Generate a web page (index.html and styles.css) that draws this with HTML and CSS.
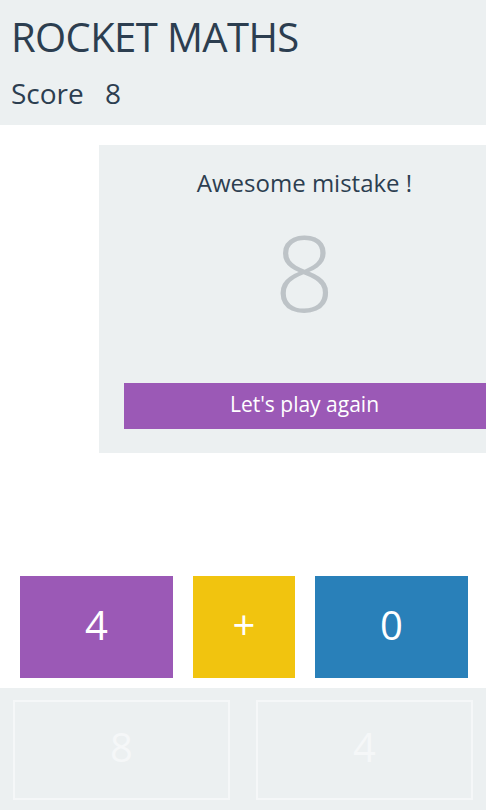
FILE: index.html
```html
<!DOCTYPE html>
<html>
<head>
<meta charset="utf-8">
<link rel="stylesheet" href="styles.css">
</head>
<body>
<div class="app">
  <header class="top">
    <h1 class="title">ROCKET MATHS</h1>
    <div class="score">Score <span class="score-val">8</span></div>
  </header>
  <section class="card">
    <div class="msg">Awesome mistake !</div>
    <div class="big">8</div>
    <button class="again">Let's play again</button>
  </section>
  <div class="tiles">
    <div class="tile purple">4</div>
    <div class="tile yellow op">+</div>
    <div class="tile blue">0</div>
  </div>
  <div class="answers">
    <div class="answer">8</div>
    <div class="answer">4</div>
  </div>
</div>
</body>
</html>
```
FILE: styles.css
```css
* { box-sizing: border-box; }
html, body { margin: 0; padding: 0; background: #fff; }
body { font-family: "Open Sans", "Noto Sans", sans-serif; color: #2c3e50; }
.app { width: 486px; height: 810px; overflow: hidden; }
.top {
  height: 125px;
  background: #ecf0f1;
  padding: 13px 0 0 11px;
}
.title {
  margin: 0;
  font-size: 40px;
  line-height: 48px;
  font-weight: 400;
  letter-spacing: -0.6px;
}
.score {
  margin-top: 15px;
  font-size: 28px;
  line-height: 34px;
}
.score-val { margin-left: 14px; }
.card {
  margin: 20px 0 0 99px;
  width: 387px;
  height: 308px;
  background: #ecf0f1;
  padding: 22px 0 0 24px;
  display: flex;
  flex-direction: column;
  align-items: center;
}
.msg { font-size: 24px; line-height: 32px; }
.big {
  margin-top: 20px;
  font-size: 105px;
  line-height: 105px;
  font-weight: 350;
  color: #bdc3c7;
}
.again {
  margin-top: 59px;
  width: 362px;
  height: 46px;
  border: 0;
  padding: 0 0 4px;
  background: #9b59b6;
  color: #fff;
  font-family: inherit;
  font-size: 21px;
  line-height: 42px;
}
.tiles {
  margin-top: 123px;
  padding-left: 20px;
  display: flex;
  gap: 20px;
}
.tile {
  width: 153px;
  height: 102px;
  color: #fff;
  font-size: 40px;
  line-height: 98px;
  padding-bottom: 4px;
  text-align: center;
}
.tile.op { width: 102px; }
.purple { background: #9b59b6; }
.yellow { background: #f1c40f; }
.blue { background: #2980b9; }
.answers {
  margin-top: 10px;
  height: 122px;
  background: #ecf0f1;
  padding: 12px 13px;
  display: flex;
  gap: 26px;
}
.answer {
  width: 218px;
  height: 100px;
  border: 2px solid #f5f7f8;
  color: #f5f7f8;
  font-size: 40px;
  line-height: 90px;
  text-align: center;
}
```
